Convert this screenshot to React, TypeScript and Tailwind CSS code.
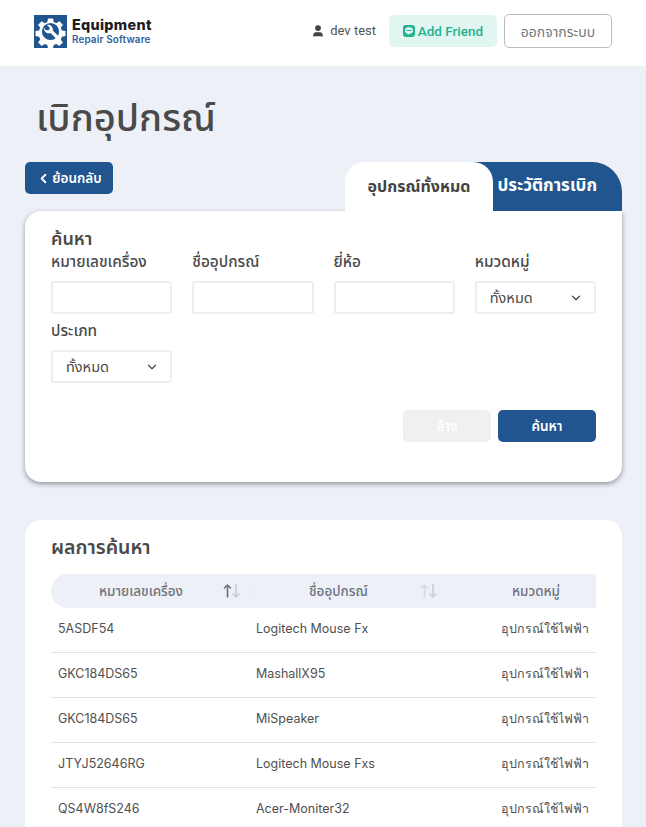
import React from "react";
import { ChevronLeft, ChevronDown, User } from "lucide-react";

const sans = "font-['Inter','Noto_Sans','Noto_Sans_Thai','Loma','DejaVu_Sans',sans-serif]";

const labels = ["หมายเลขเครื่อง", "ชื่ออุปกรณ์", "ยี่ห้อ"];
const rows = [
  ["5ASDF54", "Logitech Mouse Fx"],
  ["GKC184DS65", "MashallX95"],
  ["GKC184DS65", "MiSpeaker"],
  ["JTYJ52646RG", "Logitech Mouse Fxs"],
  ["QS4W8fS246", "Acer-Moniter32"],
];

function Field({ label, select }: { label: string; select?: boolean }) {
  return (
    <div className="flex flex-col">
      <div className="h-[20px] text-[15.4px] leading-[22px] font-medium text-[#4a4a4a]">{label}</div>
      <div className="mt-[10px] flex h-[33px] items-center justify-between rounded-[3px] border-2 border-[#eeeeee] bg-white pl-[13px] pr-[11px] text-[14.5px] text-[#4a4a4a]">
        {select ? (
          <>
            <span>ทั้งหมด</span>
            <ChevronDown size={14} strokeWidth={2.2} />
          </>
        ) : null}
      </div>
    </div>
  );
}

function Sort({ up }: { up?: boolean }) {
  return (
    <svg width="18" height="14" viewBox="0 0 18 14" fill="none" strokeWidth="1.6" strokeLinecap="round" strokeLinejoin="round">
      <path d="M4.5 13V1M1.5 4 4.5 1l3 3" stroke={up ? "#6b7280" : "#d3d8e2"} />
      <path d="M13 1v12M10 10l3 3 3-3" stroke="#c6ccd8" />
    </svg>
  );
}

export default function App() {
  return (
    <div className={`${sans} h-[827px] w-[646px] overflow-hidden bg-[#edf0f7]`}>
      <header className="flex h-[66px] items-center bg-white pb-[4px] pl-[34px] pr-[34px]">
        <div className="flex items-center gap-[5px]">
          <svg width="33" height="33" viewBox="0 0 33 33">
            <rect width="33" height="33" fill="#20558f" />
            <path
              d="M14 3.5h5l.7 3.6 2.6 1.1 3-2 3.6 3.5-2.1 3.1 1.1 2.6 3.6.7v5l-3.6.7-1.1 2.6 2.1 3-3.6 3.6-3-2.1-2.6 1.1-.7 3H14l-.7-3-2.6-1.1-3 2.1-3.6-3.6 2.1-3-1.1-2.6-3.6-.7v-5l3.6-.7 1.1-2.6-2.1-3.1 3.6-3.5 3 2 2.6-1.1z"
              fill="#fff"
            />
            <circle cx="16.5" cy="16.5" r="8.6" fill="#20558f" />
            <path d="M10 12.5a5 5 0 0 0 6.6 5.6l5.6 5.6 2.4-2.4-5.6-5.6A5 5 0 0 0 13 10l3 3-1.7 2.5-2.8-.4z" fill="#fff" />
          </svg>
          <div className="flex flex-col">
            <span className="font-['Inter'] text-[14.4px] leading-[17px] font-extrabold tracking-[0.3px] text-[#1c1c22]">Equipment</span>
            <span className="font-['Inter'] text-[9.8px] leading-[14px] font-semibold tracking-[0.2px] text-[#2b5e9b]">Repair Software</span>
          </div>
        </div>
        <div className="ml-auto flex items-center">
          <User size={14} fill="#444444" stroke="#444444" strokeWidth={2} />
          <span className="ml-[5px] font-['Roboto'] text-[13px] text-[#555555]">dev test</span>
          <div className="ml-[13px] flex h-[32px] w-[108px] items-center justify-center gap-[3px] rounded-[5px] bg-[#e2f6f1] font-['Roboto'] text-[13.5px] font-medium text-[#23b28f]">
            <svg width="12" height="12" viewBox="0 0 12 12">
              <rect width="12" height="12" rx="3" fill="#23b28f" />
              <ellipse cx="6" cy="5.5" rx="4" ry="3.2" fill="#e2f6f1" />
              <path d="M4 8l1 2 2-2z" fill="#e2f6f1" />
              <rect x="3.5" y="5" width="5" height="1" fill="#23b28f" />
            </svg>
            Add Friend
          </div>
          <div className="ml-[7px] flex h-[34px] w-[108px] items-center justify-center rounded-[5px] border-[1.5px] border-[#bbbbc2] bg-white text-[14px] text-[#777777]">
            ออกจากระบบ
          </div>
        </div>
      </header>

      <main className="pl-[25px] pr-[24px]">
        <h1 className="ml-[11px] pt-[25px] text-[38px] leading-[52px] font-medium text-[#4a4a4a]">เบิกอุปกรณ์</h1>

        <div className="mt-[19px] flex h-[49px] items-start">
          <button className="flex h-[32px] w-[88px] items-center justify-center gap-[1px] rounded-[5px] bg-[#20558f] text-[13.5px] font-semibold text-white">
            <ChevronLeft size={15} strokeWidth={3} />
            ย้อนกลับ
          </button>
          <div className="ml-auto flex h-[49px] w-[277px]">
            <div className="z-10 flex h-[49px] w-[148px] shrink-0 items-center justify-center rounded-t-[20px] bg-white pb-[1px] text-[16px] font-bold text-[#444444]">
              อุปกรณ์ทั้งหมด
            </div>
            <div className="-ml-[20px] flex h-[49px] flex-1 items-center justify-end rounded-tr-[30px] bg-[#20558f] pb-[1px] pr-[25px] text-[17px] font-bold text-white">
              ประวัติการเบิก
            </div>
          </div>
        </div>

        <section className="h-[271px] rounded-b-[16px] rounded-tl-[16px] bg-white px-[26px] pt-[15px] shadow-[0_2px_5px_rgba(60,60,70,0.5)]">
          <h2 className="text-[18px] leading-[25px] font-semibold text-[#4a4a4a]">ค้นหา</h2>
          <div className="grid grid-cols-4 gap-x-[20px] gap-y-[6px]">
            {labels.map((l) => (
              <Field key={l} label={l} />
            ))}
            <Field label="หมวดหมู่" select />
            <Field label="ประเภท" select />
          </div>
          <div className="mt-[27px] flex justify-end gap-[7px]">
            <button className="h-[32px] w-[88px] rounded-[5px] bg-[#f0f0f0] text-[13.5px] font-semibold text-white">ล้าง</button>
            <button className="h-[32px] w-[98px] rounded-[5px] bg-[#20558f] text-[13.5px] font-semibold text-white">ค้นหา</button>
          </div>
        </section>

        <section className="mt-[38px] h-[400px] rounded-[16px] bg-white px-[26px] pt-[13px]">
          <h2 className="text-[19.5px] leading-[28px] font-semibold text-[#4a4a4a]">ผลการค้นหา</h2>
          <div className="mt-[13px] flex h-[34px] items-center rounded-l-[17px] bg-[#edf0f7] text-[13.5px] font-medium text-[#6f747e]">
            <div className="flex w-[203px] items-center border-r border-[#e8ebf3] pl-[48px] pr-[12px]">
              <span className="flex-1">หมายเลขเครื่อง</span>
              <Sort up />
            </div>
            <div className="flex w-[194px] items-center pl-[55px] pr-[10px]">
              <span className="flex-1">ชื่ออุปกรณ์</span>
              <Sort />
            </div>
            <div className="flex-1 pl-[28px] text-center">หมวดหมู่</div>
          </div>
          {rows.map((r, i) => (
            <div key={i} className="flex h-[45px] items-center border-b border-[#e3e3e3] pb-[2px] font-['Inter'] text-[12.5px] text-[#505050]">
              <div className="w-[205px] pl-[7px]">{r[0]}</div>
              <div className="flex-1">{r[1]}</div>
              <div className="pr-[7px]">อุปกรณ์ใช้ไฟฟ้า</div>
            </div>
          ))}
        </section>
      </main>
    </div>
  );
}
